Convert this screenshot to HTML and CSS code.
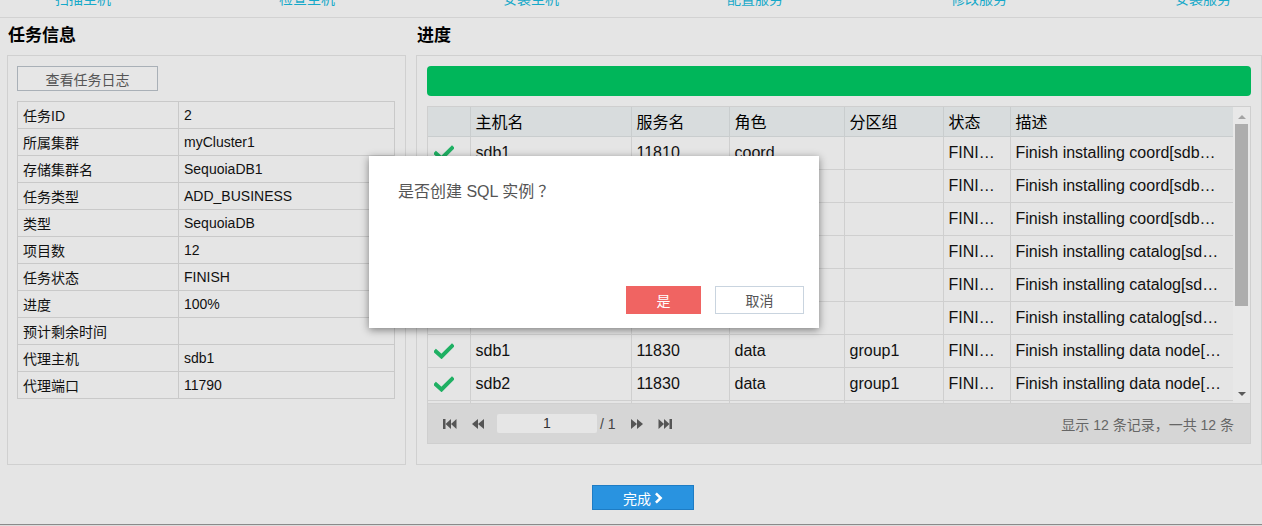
FILE: index.html
```html
<!DOCTYPE html>
<html lang="zh-CN">
<head>
<meta charset="utf-8">
<title>任务信息</title>
<link rel="stylesheet" href="styles.css">
</head>
<body>
<div class="steps">
  <ul class="steps-list">
    <li>扫描主机</li>
    <li>检查主机</li>
    <li>安装主机</li>
    <li>配置服务</li>
    <li>修改服务</li>
    <li>安装服务</li>
  </ul>
</div>

<div class="main">
  <section class="col col-left">
    <h2 class="title">任务信息</h2>
    <div class="panel panel-left">
      <button class="btn-log">查看任务日志</button>
      <table class="info">
        <tr><td class="k">任务ID</td><td>2</td></tr>
        <tr><td class="k">所属集群</td><td>myCluster1</td></tr>
        <tr><td class="k">存储集群名</td><td>SequoiaDB1</td></tr>
        <tr><td class="k">任务类型</td><td>ADD_BUSINESS</td></tr>
        <tr><td class="k">类型</td><td>SequoiaDB</td></tr>
        <tr><td class="k">项目数</td><td>12</td></tr>
        <tr><td class="k">任务状态</td><td>FINISH</td></tr>
        <tr><td class="k">进度</td><td>100%</td></tr>
        <tr><td class="k">预计剩余时间</td><td></td></tr>
        <tr><td class="k">代理主机</td><td>sdb1</td></tr>
        <tr><td class="k">代理端口</td><td>11790</td></tr>
      </table>
    </div>
  </section>

  <section class="col col-right">
    <h2 class="title">进度</h2>
    <div class="panel panel-right">
      <div class="bar"></div>
      <div class="grid">
        <div class="grid-main">
          <div class="grid-view">
            <table class="tasks">
              <colgroup>
                <col class="c-ok"><col class="c-host"><col class="c-svc"><col class="c-role"><col class="c-grp"><col class="c-st"><col class="c-desc">
              </colgroup>
              <thead>
                <tr><th></th><th>主机名</th><th>服务名</th><th>角色</th><th>分区组</th><th>状态</th><th>描述</th></tr>
              </thead>
              <tbody>
                <tr><td class="ok"><svg class="chk" viewBox="0 0 20 16"><path d="M2 8.5 L7.5 13.5 L18 3"/></svg></td><td>sdb1</td><td>11810</td><td>coord</td><td></td><td>FINI…</td><td>Finish installing coord[sdb…</td></tr>
                <tr><td class="ok"><svg class="chk" viewBox="0 0 20 16"><path d="M2 8.5 L7.5 13.5 L18 3"/></svg></td><td>sdb2</td><td>11810</td><td>coord</td><td></td><td>FINI…</td><td>Finish installing coord[sdb…</td></tr>
                <tr><td class="ok"><svg class="chk" viewBox="0 0 20 16"><path d="M2 8.5 L7.5 13.5 L18 3"/></svg></td><td>sdb3</td><td>11810</td><td>coord</td><td></td><td>FINI…</td><td>Finish installing coord[sdb…</td></tr>
                <tr><td class="ok"><svg class="chk" viewBox="0 0 20 16"><path d="M2 8.5 L7.5 13.5 L18 3"/></svg></td><td>sdb1</td><td>11800</td><td>catalog</td><td></td><td>FINI…</td><td>Finish installing catalog[sd…</td></tr>
                <tr><td class="ok"><svg class="chk" viewBox="0 0 20 16"><path d="M2 8.5 L7.5 13.5 L18 3"/></svg></td><td>sdb2</td><td>11800</td><td>catalog</td><td></td><td>FINI…</td><td>Finish installing catalog[sd…</td></tr>
                <tr><td class="ok"><svg class="chk" viewBox="0 0 20 16"><path d="M2 8.5 L7.5 13.5 L18 3"/></svg></td><td>sdb3</td><td>11800</td><td>catalog</td><td></td><td>FINI…</td><td>Finish installing catalog[sd…</td></tr>
                <tr><td class="ok"><svg class="chk" viewBox="0 0 20 16"><path d="M2 8.5 L7.5 13.5 L18 3"/></svg></td><td>sdb1</td><td>11830</td><td>data</td><td>group1</td><td>FINI…</td><td>Finish installing data node[…</td></tr>
                <tr><td class="ok"><svg class="chk" viewBox="0 0 20 16"><path d="M2 8.5 L7.5 13.5 L18 3"/></svg></td><td>sdb2</td><td>11830</td><td>data</td><td>group1</td><td>FINI…</td><td>Finish installing data node[…</td></tr>
                <tr><td class="ok"><svg class="chk" viewBox="0 0 20 16"><path d="M2 8.5 L7.5 13.5 L18 3"/></svg></td><td>sdb3</td><td>11830</td><td>data</td><td>group1</td><td>FINI…</td><td>Finish installing data node[…</td></tr>
              </tbody>
            </table>
          </div>
          <div class="vscroll">
            <span class="arr arr-up"></span>
            <span class="thumb"></span>
            <span class="arr arr-down"></span>
          </div>
        </div>
        <div class="pager">
          <div class="pager-nav">
            <svg class="pg" viewBox="0 0 14 12"><rect x="0" y="1" width="2.5" height="10"/><path d="M2.5 6 L8 1 L8 11 Z"/><path d="M8 6 L13.5 1 L13.5 11 Z"/></svg>
            <svg class="pg" viewBox="0 0 14 12"><path d="M1 6 L7 1 L7 11 Z"/><path d="M7 6 L13 1 L13 11 Z"/></svg>
            <span class="page-input">1</span>
            <span class="page-total">/ 1</span>
            <svg class="pg" viewBox="0 0 14 12"><path d="M1 1 L7 6 L1 11 Z"/><path d="M7 1 L13 6 L7 11 Z"/></svg>
            <svg class="pg" viewBox="0 0 14 12"><path d="M0.5 1 L6 6 L0.5 11 Z"/><path d="M6 1 L11.5 6 L6 11 Z"/><rect x="11.5" y="1" width="2.5" height="10"/></svg>
          </div>
          <div class="pager-info">显示 12 条记录，一共 12 条</div>
        </div>
      </div>
    </div>
  </section>
</div>

<div class="footer">
  <button class="btn-done">完成 <svg class="chev" viewBox="0 0 10 14"><path d="M2 1.5 L7.5 7 L2 12.5"/></svg></button>
</div>
<div class="bottom-line"></div>

<div class="modal">
  <p class="modal-text">是否创建 SQL 实例<span class="q">？</span></p>
  <div class="modal-actions">
    <button class="btn-yes">是</button>
    <button class="btn-cancel">取消</button>
  </div>
</div>
</body>
</html>
```

FILE: styles.css
```css
* { box-sizing: border-box; }
html, body {
  margin: 0;
  padding: 0;
}
body {
  background: #e5e5e5;
  font-family: "Liberation Sans", Arial, "Noto Sans CJK SC", sans-serif;
  color: #000;
  width: 1262px;
  height: 526px;
  overflow: hidden;
  position: relative;
}

/* top steps */
.steps {
  height: 18px;
  border-bottom: 1px solid #d2d2d2;
  overflow: hidden;
}
.steps-list {
  list-style: none;
  margin: -9px 0 0 0;
  padding: 0 0 0 55px;
  display: flex;
}
.steps-list li {
  flex: 0 0 224px;
  width: 224px;
  font-size: 14px;
  line-height: 16px;
  color: #17a9c9;
}

/* main columns */
.main {
  display: flex;
  gap: 10px;
  padding-left: 7px;
}
.col-left { width: 399px; flex: 0 0 399px; }
.col-right { width: 846px; flex: 0 0 846px; }
.title {
  margin: 0;
  height: 37px;
  line-height: 36px;
  font-size: 17px;
  font-weight: bold;
  padding-left: 1px;
}
.panel {
  border: 1px solid #d0d0d0;
  height: 410px;
  padding: 10px;
}
.panel-left { padding: 10px 10px 10px 9px; }

.btn-log {
  display: block;
  width: 141px;
  height: 25px;
  border: 1px solid #a9b0b7;
  background: #e6e6e6;
  color: #555;
  font-family: inherit;
  font-size: 14px;
  padding: 0;
  margin: 0 0 10px 0;
}

.info {
  width: 378px;
  border-collapse: collapse;
  table-layout: fixed;
  font-size: 14px;
}
.info td {
  border: 1px solid #c9c9c9;
  height: 27px;
  padding: 0 0 0 5px;
  color: #111;
}
.info td.k { width: 161px; }

/* progress */
.bar {
  height: 30px;
  background: #00b65a;
  border-radius: 4px;
  margin-bottom: 10px;
}
.grid {
  border: 1px solid #cfcfcf;
  width: 824px;
}
.grid-main {
  display: flex;
  height: 296px;
}
.grid-view {
  width: 805px;
  overflow: hidden;
}
.tasks {
  width: 805px;
  border-collapse: collapse;
  table-layout: fixed;
  font-size: 16px;
}
.c-ok { width: 42px; }
.c-host { width: 161px; }
.c-svc { width: 98px; }
.c-role { width: 115px; }
.c-grp { width: 99px; }
.c-st { width: 67px; }
.c-desc { width: 223px; }
.tasks th {
  background: #d8dcdd;
  height: 29px;
  font-weight: normal;
  text-align: left;
  padding: 0 0 0 5px;
  border-right: 1px solid #c9cdce;
  border-bottom: 1px solid #c9cdce;
}
.tasks td {
  height: 33px;
  padding: 0 0 0 5px;
  border: 1px solid #cfcfcf;
  border-top: none;
  white-space: nowrap;
  overflow: hidden;
  color: #111;
}
.tasks tr td:first-child, .tasks tr th:first-child { border-left: none; }
.tasks td.ok { padding: 0 0 0 6px; }
.chk {
  width: 20px;
  height: 16px;
  display: block;
}
.chk path {
  fill: none;
  stroke: #1fb063;
  stroke-width: 4;
  stroke-linecap: square;
}

.vscroll {
  width: 17px;
  background: #e8e8e8;
  display: flex;
  flex-direction: column;
  align-items: center;
  padding: 0 2px;
}
.arr {
  width: 0;
  height: 0;
  border-left: 4px solid transparent;
  border-right: 4px solid transparent;
}
.arr-up {
  border-bottom: 4px solid #a3a3a3;
  margin: 8px 0 5px;
}
.arr-down {
  border-top: 4px solid #5a5a5a;
  margin: auto 0 7px;
}
.thumb {
  width: 13px;
  height: 182px;
  background: #adadad;
}

.pager {
  height: 40px;
  background: #d6d6d6;
  display: flex;
  align-items: center;
  justify-content: space-between;
  padding: 0 16px 0 15px;
  border-top: 1px solid #d0d0d0;
}
.pager-nav {
  display: flex;
  align-items: center;
}
.pg {
  width: 14px;
  height: 12px;
  fill: #555;
  margin-right: 14px;
}
.pg:nth-child(2) { margin-right: 12px; }
.page-input {
  width: 100px;
  height: 19px;
  background: #e6e6e6;
  text-align: center;
  font-size: 14px;
  line-height: 19px;
  color: #333;
  border-radius: 2px;
}
.page-total {
  font-size: 14px;
  color: #444;
  margin: 0 14px 0 3px;
}
.pager-info {
  font-size: 14px;
  color: #666;
}

/* footer */
.footer {
  display: flex;
  justify-content: center;
  padding: 20px 0 0 24px;
  height: 59px;
}
.btn-done {
  width: 102px;
  height: 25px;
  background: #2993e0;
  border: 1px solid #1e7cc4;
  color: #fff;
  font-family: inherit;
  font-size: 14px;
  padding: 0;
  display: flex;
  align-items: center;
  justify-content: center;
  gap: 3px;
}
.chev {
  width: 9px;
  height: 12px;
}
.chev path {
  fill: none;
  stroke: #fff;
  stroke-width: 3;
}
.bottom-line {
  height: 2px;
  border-top: 1px solid #8a8a8a;
  background: #dcdcdc;
}

/* modal */
.modal {
  position: absolute;
  left: 369px;
  top: 156px;
  width: 450px;
  height: 172px;
  background: #fff;
  box-shadow: 0 2px 8px rgba(0, 0, 0, 0.45);
  padding: 24px 15px 14px 29px;
  display: flex;
  flex-direction: column;
  justify-content: space-between;
}
.modal-text {
  margin: 0;
  font-size: 16px;
  line-height: 20px;
  color: #555;
}
.modal-text .q {
  font-family: "Noto Sans CJK TC", "Noto Sans CJK SC", sans-serif;
  padding-left: 4px;
}
.modal-actions {
  display: flex;
  justify-content: flex-end;
  gap: 14px;
}
.btn-yes, .btn-cancel {
  height: 28px;
  font-family: inherit;
  font-size: 14px;
  padding: 0;
}
.btn-yes {
  width: 75px;
  background: #f06462;
  border: none;
  color: #fff;
}
.btn-cancel {
  width: 89px;
  background: #fff;
  border: 1px solid #c9d4df;
  color: #555;
}
```
